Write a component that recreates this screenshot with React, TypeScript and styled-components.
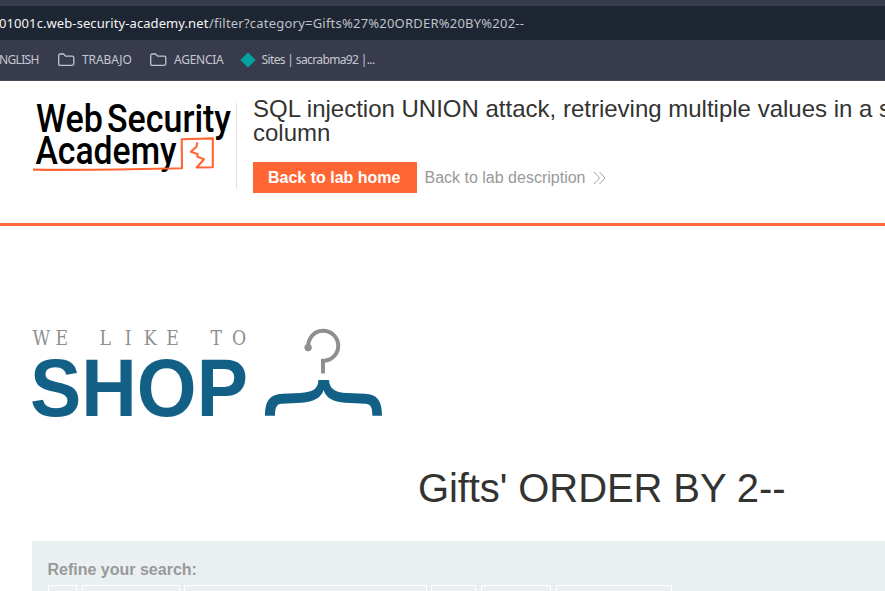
import React from "react";
import styled, { createGlobalStyle } from "styled-components";

const GlobalStyle = createGlobalStyle`
  * { box-sizing: border-box; }
  html, body { margin: 0; padding: 0; background: #fff; overflow: hidden; }
  body { font-family: "Liberation Sans", Arial, sans-serif; color: #333332; }
`;

const Page = styled.div`
  width: 885px;
  height: 591px;
  overflow: hidden;
  white-space: nowrap;
`;

const Chrome = styled.div`
  height: 81px;
  padding-top: 6px;
  background: #373b4d;
  border-bottom: 1px solid #484652;
  font-family: "Noto Sans", sans-serif;
`;

const AddressBar = styled.div`
  display: flex;
  align-items: center;
  height: 34px;
  background: #1f2633;
  color: #bfc2c8;
  font-size: 13px;
`;

const Host = styled.span`
  width: 210px;
  margin-left: -1px;
  color: #f4f5f6;
  letter-spacing: 0.09px;
`;

const UrlPath = styled.span`
  letter-spacing: 0.22px;
`;

const Bookmarks = styled.div`
  display: flex;
  height: 39px;
  margin-left: -1px;
  align-items: center;
  color: #c6c8ce;
  font-size: 12px;
`;

const Bookmark = styled.div<{ $width: number; $gap?: number; $spacing?: number }>`
  display: flex;
  flex: none;
  align-items: center;
  gap: ${(p) => p.$gap ?? 7}px;
  width: ${(p) => p.$width}px;
  letter-spacing: ${(p) => p.$spacing ?? 0}px;
  svg { flex: none; display: block; }
`;

const LabHeader = styled.header`
  display: flex;
  height: 145px;
  padding: 16px 0 0 32px;
  border-bottom: 3px solid #ff6633;
`;

const LogoBox = styled.div`
  width: 205px;
  height: 86px;
  margin-top: 6px;
  margin-right: 16px;
  border-right: 1px solid #e2e2e2;
  svg { display: block; overflow: visible; }
`;

const LabTitle = styled.h2`
  width: 700px;
  margin: 0;
  font-size: 24px;
  line-height: 24px;
  font-weight: 400;
`;

const Actions = styled.div`
  display: flex;
  align-items: center;
  margin-top: 17px;
`;

const HomeButton = styled.a`
  width: 164px;
  height: 31px;
  padding-left: 15px;
  background: #ff6633;
  color: #fff;
  font-size: 16px;
  font-weight: 700;
  line-height: 31px;
`;

const DescriptionLink = styled.a`
  display: flex;
  align-items: center;
  gap: 8px;
  margin-left: 7.5px;
  color: #999;
  font-size: 16px;
`;

const ShopBanner = styled.div`
  padding: 94px 0 0 24px;
  height: 240px;
  svg { display: block; }
`;

const CategoryTitle = styled.h1`
  margin: 0;
  padding-left: 418px;
  height: 75px;
  font-size: 40px;
  line-height: 44px;
  font-weight: 400;
  letter-spacing: -0.09px;
`;

const SearchPanel = styled.section`
  height: 60px;
  margin-left: 32px;
  padding: 20px 0 0 16px;
  background: #eaeff2;
`;

const SearchLabel = styled.div`
  height: 24px;
  margin-left: -0.5px;
  color: #999;
  font-size: 16px;
  font-weight: 700;
  line-height: 18px;
`;

const Filters = styled.div`
  display: flex;
  gap: 4.45px;
`;

const Filter = styled.a<{ $width: number }>`
  flex: none;
  width: ${(p) => p.$width}px;
  height: 32px;
  border: 1px solid #fff;
`;

const FolderIcon = () => (
  <svg width="17" height="14" viewBox="0 0 17 14" fill="none" stroke="#c3c5cb" strokeWidth="1.3">
    <path d="M.7 2.5Q.7 1 2.2 1H5.6L7.6 3.1H14.2Q15.8 3.1 15.8 4.6V10.8Q15.8 12.3 14.2 12.3H2.2Q.7 12.3.7 10.8Z" />
  </svg>
);

const AcademyLogo = () => (
  <svg width="204" height="86" viewBox="32 103 204 86">
    <g fill="#000" fontFamily="Roboto, sans-serif" fontSize="38.2" fontWeight="500">
      <text x="36" y="131.5" textLength="67" lengthAdjust="spacingAndGlyphs">Web</text>
      <text x="107" y="131.5" textLength="124" lengthAdjust="spacingAndGlyphs">Security</text>
      <text x="35.5" y="164" textLength="141" lengthAdjust="spacingAndGlyphs">Academy</text>
    </g>
    <path
      d="M33 169.6C80 170.6 140 169 182 168.3L181.7 139.2L212.8 138.4L212.8 167.2L196.7 167.5L204 159.2L197.4 156.8L197.6 154L190.8 151.8L196.4 146.8L197.3 142.4"
      fill="none" stroke="#ff6633" strokeWidth="2.1" strokeLinejoin="round"
    />
  </svg>
);

const SLOGAN_SCALE = 0.84;
const sloganX = [32.6, 55.4, 78, 99.5, 124.8, 143.8, 166.2, 188, 210.5, 232]
  .map((x) => (x / SLOGAN_SCALE).toFixed(1))
  .join(" ");

const ShopLogo = () => (
  <svg width="366" height="104" viewBox="24 320 366 104">
    <text x={sloganX} y="344.8" transform={`scale(${SLOGAN_SCALE} 1)`} fontFamily="DejaVu Serif, serif" fontSize="20.5" fill="#8f8f8f" xmlSpace="preserve">WE LIKE TO</text>
    <text x="30" y="416" textLength="218" lengthAdjust="spacingAndGlyphs" fontFamily="Liberation Sans, sans-serif" fontSize="81" fontWeight="700" fill="#126086">SHOP</text>
    <path d="M308.3 347A15 15 0 1 1 323 360.8V373.6" fill="none" stroke="#8f8f8f" strokeWidth="4" />
    <circle cx="308.1" cy="347.6" r="3.7" fill="#8f8f8f" />
    <path
      transform="translate(250 315) scale(.33333)"
      fill="#126086"
      d="M205 195H237C238 220 255 233 290 234L345 236C380 238 396 255 396 302H367C367 275 362 267 345 266L285 263C250 260 228 250 221 225C213 250 190 260 155 263L95 266C80 267 75 277 75 302H45C45 255 62 238 97 236L150 234C190 232 205 220 205 195Z"
    />
  </svg>
);

const filterWidths = [29.3, 97.9, 242.7, 45, 70.5, 116];

export default function App() {
  return (
    <Page>
      <GlobalStyle />
      <Chrome>
        <AddressBar>
          <Host>01001c.web-security-academy.net</Host>
          <UrlPath>/filter?category=Gifts%27%20ORDER%20BY%202--</UrlPath>
        </AddressBar>
        <Bookmarks>
          <Bookmark $width={59} $spacing={-0.65}>NGLISH</Bookmark>
          <Bookmark $width={92} $spacing={-0.1}><FolderIcon />TRABAJO</Bookmark>
          <Bookmark $width={90} $spacing={-0.25}><FolderIcon />AGENCIA</Bookmark>
          <Bookmark $width={150} $gap={5.5} $spacing={-0.63}>
            <svg width="16" height="16" viewBox="0 0 16 16"><path d="M8 .8 15.2 8 8 15.2.8 8Z" fill="#05a19c" stroke="#05a19c" strokeLinejoin="round" /></svg>
            Sites | sacrabma92 |...
          </Bookmark>
        </Bookmarks>
      </Chrome>
      <LabHeader>
        <LogoBox><AcademyLogo /></LogoBox>
        <div>
          <LabTitle>SQL injection UNION attack, retrieving multiple values in a single<br />column</LabTitle>
          <Actions>
            <HomeButton>Back to lab home</HomeButton>
            <DescriptionLink>
              Back to lab description
              <svg width="13" height="14" viewBox="0 0 13 14" fill="none" stroke="#999" strokeWidth=".9">
                <path d="M1 1 6.5 7 1 13M6.5 1 12 7 6.5 13" />
              </svg>
            </DescriptionLink>
          </Actions>
        </div>
      </LabHeader>
      <ShopBanner><ShopLogo /></ShopBanner>
      <CategoryTitle>Gifts' ORDER BY 2--</CategoryTitle>
      <SearchPanel>
        <SearchLabel>Refine your search:</SearchLabel>
        <Filters>{filterWidths.map((w) => <Filter key={w} $width={w} />)}</Filters>
      </SearchPanel>
    </Page>
  );
}
